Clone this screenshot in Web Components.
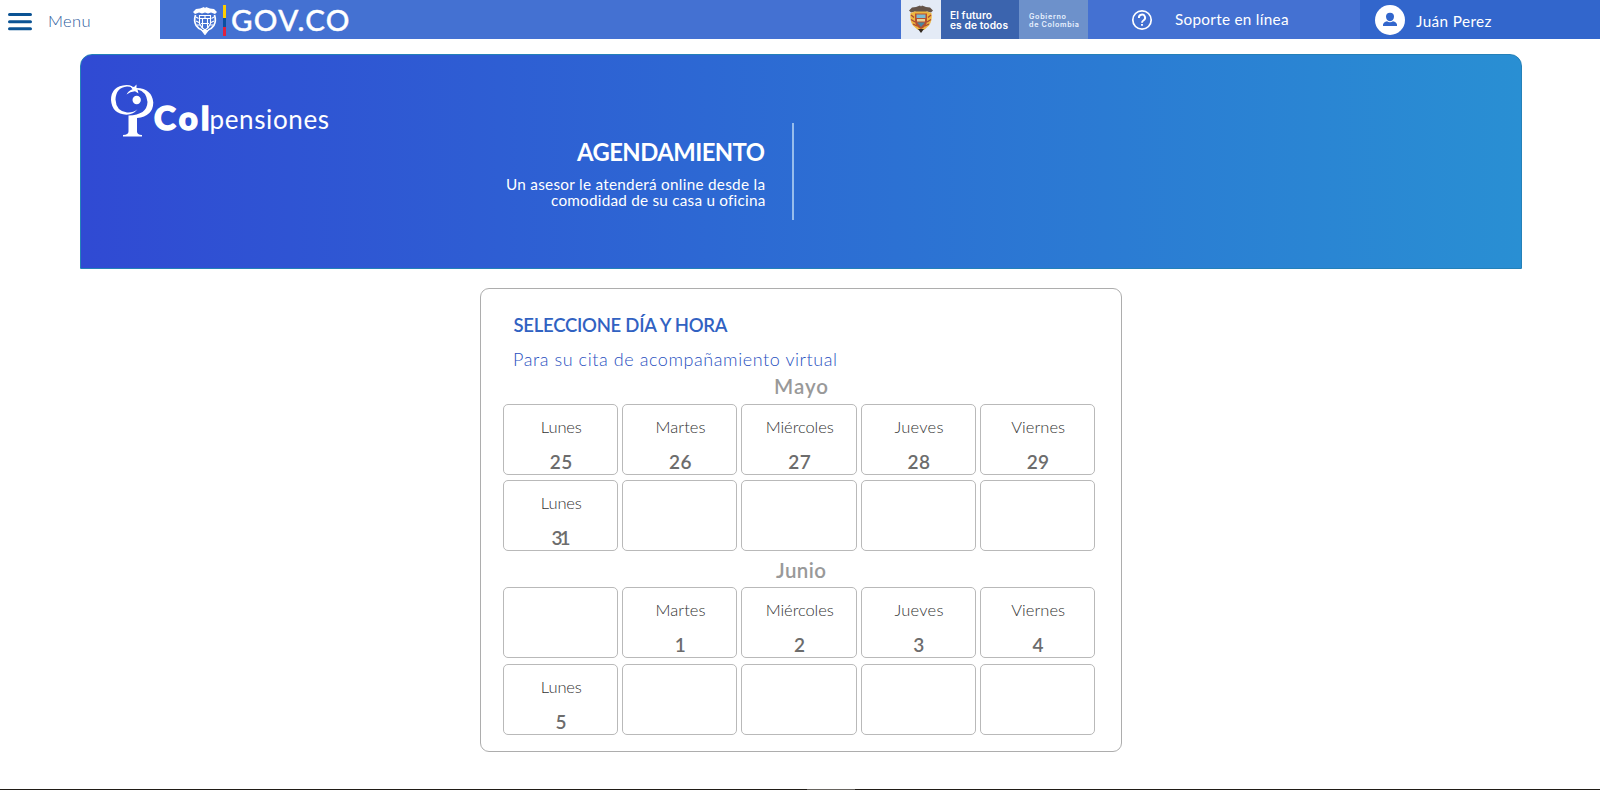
<!DOCTYPE html>
<html lang="es">
<head>
<meta charset="utf-8">
<title>Agendamiento</title>
<style>
html,body{margin:0;background:#fff;font-family:Lato,"Open Sans",sans-serif}
body{height:790px;overflow:hidden}
</style>
</head>
<body>
<agenda-app></agenda-app>
<script>
const define=(name,html,init)=>customElements.define(name,class extends HTMLElement{
  connectedCallback(){
    if(this.shadowRoot)return;
    const t=document.createElement('template');
    t.innerHTML=typeof html==='function'?html(this):html;
    this.attachShadow({mode:'open'}).append(t.content.cloneNode(true));
    if(init)init(this);
  }
});

/* One line of text: s = size, b = baseline from the top of the box, w = advance width */
define('fit-text',el=>{
  const s=+el.getAttribute('s'),b=+el.getAttribute('b');
  return `<style>:host{display:block;flex:none;white-space:nowrap;width:${el.getAttribute('w')}px;height:${el.getAttribute('h')||b}px;font-size:${s}px;line-height:${2*(b-.387*s)}px}span{display:inline-block}</style><span><slot></slot></span>`;
},el=>{
  const sp=el.shadowRoot.querySelector('span'),slot=el.shadowRoot.querySelector('slot');
  const fit=()=>{
    const n=slot.assignedNodes({flatten:true}).map(x=>x.textContent).join('').trim().length;
    if(n<2)return;
    sp.style.letterSpacing='0px';
    const w=sp.getBoundingClientRect().width;
    sp.style.letterSpacing=((+el.getAttribute('w')-w)/(n-1))+'px';
  };
  fit();
  slot.addEventListener('slotchange',fit);
});

define('menu-button',`<style>:host{display:flex;width:160px;height:39px;flex:none;color:#2c5a9c}svg{flex:none;margin:12px 16px 0 8px}fit-text{font-weight:300}</style>
<svg width="24" height="20"><path d="M1.5 2.5H22.5M1.5 9.7H22.5M1.5 16.8H22.5" stroke="#0b5394" stroke-width="3" stroke-linecap="round"/></svg>
<fit-text s="16.5" b="27.600" w="42.500"><slot></slot></fit-text>`);

define('gov-logo',`<style>:host{display:flex;flex:none;color:#fff}.s{margin:6px 5px 0 0}.f{width:3px;height:31px;margin:5px 5px 0 0;background:linear-gradient(#ffce00 13px,#0a4fa0 13px 22px,#e0213e 22px)}fit-text{font-weight:500;-webkit-text-stroke:.4px #fff}</style>
<svg class="s" width="26" height="29" viewBox="0 0 26 29" fill="none" stroke="#fff" stroke-width="1.1">
<path fill="#fff" stroke="none" d="M8 2.500 12 1l1 1.300L14 1l4 1.500 4 .5 3 3-2 2-4-1.500L16 7.500 13 6.500 10 7.500 7 6.500 3 8 1 6 4 3Z"/>
<path stroke-width="1.700" d="M3.500 9Q1.500 15 4.200 19.500Q6.500 23 10 24M22.500 9Q24.500 15 21.800 19.500Q19.500 23 16 24"/>
<path d="M7.500 9.500H18.500V17.500Q17 21.500 13 24Q9 21.500 7.500 17.500ZM7.500 12.500H18.500M9 17.500H17M10.500 13V22M15.500 13V22M13 9.500V12"/><path d="M4 11l2.500 1.500M4 15l3 1.500M5 19l3 0M22 11l-2.500 1.500M22 15l-3 1.500M21 19l-3 0"/><path d="M10 24.500H16L13 28.500Z" fill="#fff"/></svg>
<div class="f"></div><fit-text s="29.500" b="31" w="118.500"><slot></slot></fit-text>`);

define('gov-badge',`<style>:host{display:flex;width:187px;height:39px;flex:none;color:#fff;font-family:Inter,"Open Sans",sans-serif}
.c{width:40px;background:#e4ebf6}.c svg{display:block;margin:5px 0 0 7px}.d{width:78px;background:#3b64ae}.l{width:69px;background:#6d91cb;color:#e9f1ff}.d fit-text{margin-left:9px;font-weight:600}.l fit-text{margin-left:10px;font-weight:600}</style>
<div class="c"><svg width="26" height="29" viewBox="0 0 26 29"><path fill="#655449" d="M8 2 12 .5l1 1 1-1 4 1.500 4 .5 3 3-2 2-4-1-3 1.500H10L7 6.500 3 7.500 1 5.500 4 2.500Z"/>
<path fill="#eeb640" d="M2.500 8 7 6.500H19L23.500 8Q24.500 16 21 20.500L16 25H10L5 20.500Q1.500 16 2.500 8Z"/><path fill="none" stroke="#a64736" stroke-width="1.300" d="M3 10l3 2.500M3 14.500l4 2.500M5 19l4 2M23 10l-3 2.500M23 14.500l-4 2.500M21 19l-4 2"/><path fill="#b5502f" d="M7 8.500H19V17Q18 22 13 24Q8 22 7 17Z"/><path fill="#7cbbd2" d="M8.500 9.500H17.500V13H8.500Z"/><path fill="#e8d392" d="M9 14H17V16.500H9Z"/><path fill="#4b86a0" d="M9 17.500H17L13 22Z"/><path fill="#332a22" d="M10 24 16 24 13 28Z"/></svg></div>
<div class="d"><fit-text s="10.200" b="19.400" h="19" w="42">El futuro</fit-text><fit-text s="10.200" b="10.400" w="58">es de todos</fit-text></div>
<div class="l"><fit-text s="7.200" b="19.500" h="19" w="37">Gobierno</fit-text><fit-text s="7.200" b="8.800" w="50">de Colombia</fit-text></div>`);

define('support-link',`<style>:host{display:flex;flex:none;color:#fff}svg{margin:9px 22px 0 0}</style>
<svg width="22" height="22" viewBox="0 0 22 22" fill="none" stroke="#fff"><circle cx="11" cy="11" r="9.200" stroke-width="1.700"/><path stroke-width="1.900" d="M7.900 9A3.100 3.100 0 1 1 12.700 11.300Q11 12.400 11 13.800M11 15V16.800"/></svg>
<fit-text s="15.300" b="25" w="113.500"><slot></slot></fit-text>`);

define('user-chip',`<style>:host{display:flex;width:240px;height:39px;flex:none;box-sizing:border-box;padding-left:15px;background:#3266cc;color:#fff}svg{margin:5px 11px 0 0}</style>
<svg width="30" height="30"><circle cx="15" cy="15" r="15" fill="#fff"/><path fill="#3266cc" d="M11 11.500a4 3.800 0 0 1 8 0q0 4-4 4.800Q11 15.500 11 11.500ZM8 21V19.500Q8.500 17 12 16.200Q15 18.500 18 16.200Q21.500 17 22 19.500V21Z"/></svg>
<fit-text s="15.300" b="27" w="75.500"><slot></slot></fit-text>`);

define('top-bar',`<style>:host{display:flex;height:39px}.b{display:flex;flex:1;background:#4471d2;padding-left:32px}gov-logo{width:709px}support-link{margin-left:43px;width:229px}</style>
<menu-button>Menu</menu-button><div class="b"><gov-logo>GOV.CO</gov-logo><gov-badge></gov-badge><support-link>Soporte en línea</support-link><user-chip>Juán Perez</user-chip></div>`);

define('col-logo',`<style>:host{display:flex;color:#fff;flex:none}svg{flex:none}.a{font-weight:900;-webkit-text-stroke:1.500px #fff}.p{font-weight:400}</style>
<svg width="43" height="54" viewBox="0 0 43 54" fill="#fff"><path d="M21 2.200Q19 1 15.500 1Q0 2 0 16Q1 30 15.500 30.700Q22.500 30.500 26.500 25.300Q22 29 16 28.500Q5 27 4.500 15.500Q5 3.500 16 2.500Q19 2.500 21 3.500Z"/>
<path d="M19 2 23 3 25.500.5 25.500 4Q41 4.500 42.300 18.500Q42 32.500 26 34V47.500Q26 50.800 31 51V52.600H12V51Q17.500 50.800 17.500 47.500V31.500Q36 31 36.500 18Q35.500 7.500 26.500 5.500L27.500 9.500 24 7.300Q19 7.500 15.500 10.500Q17 7 21.500 5.200Z"/><circle cx="25.700" cy="16" r="4.200"/></svg>
<fit-text class="a" s="33" b="46.400" h="46" w="55.500">Col</fit-text><fit-text class="p" s="26" b="46" w="119.500">pensiones</fit-text>`);

define('hero-banner',`<style>:host{display:flex;box-sizing:border-box;width:1442px;height:215px;margin:15px 0 0 80px;padding-left:30px;border-radius:12px 12px 0 0;border:1px solid #2481b8;background:linear-gradient(90deg,#304ad3,#298fd3);color:#fff}
col-logo{margin-top:29px;width:219px}.t{width:435px;margin-top:81px;display:flex;flex-direction:column;align-items:flex-end}.h{font-weight:700}hr{border:0;margin:68px 0 0 27px;width:2px;height:97px;background:#97bdec}</style>
<col-logo></col-logo><div class="t"><fit-text class="h" s="23.800" b="26" w="188"><slot name="title"></slot></fit-text>
<fit-text s="15.300" b="28.500" w="259">Un asesor le atenderá online desde la</fit-text><fit-text s="15.300" b="15" w="214">comodidad de su casa u oficina</fit-text></div><hr>`);

define('day-cell',el=>{
  const d=el.getAttribute('day'),n=el.getAttribute('num');
  const w={Lunes:41,Martes:50,'Miércoles':68,Jueves:49,Viernes:54}[d],nw=n==='31'?19:n&&n.length>1?22.5:11;
  return `<style>:host{display:flex;flex-direction:column;align-items:center;box-sizing:border-box;height:71px;border:1px solid #b9b9b9;border-radius:5px}.d{color:#333;font-weight:300;margin-left:1.500px}.n{color:#6c6c6c;font-weight:600;margin-left:1px}</style>`+(d?`<fit-text class="d" s="16.500" b="29" w="${w}">${d}</fit-text><fit-text class="n" s="19" b="35.200" w="${nw}">${n}</fit-text>`:'');
});

define('month-grid',el=>`<style>:host{display:block}.m{color:#999;font-weight:600;margin-left:${el.getAttribute('x')}px}.g{display:grid;grid-template-columns:repeat(5,1fr);column-gap:4px;row-gap:${el.getAttribute('gap')}px;margin-top:${el.getAttribute('m')}px}</style>
<fit-text class="m" s="20.500" b="${el.getAttribute('b')}" w="${el.getAttribute('w')}">${el.getAttribute('name')}</fit-text><div class="g">${el.getAttribute('days').split(' ').map(x=>{const[d,n]=x.split(':');return n?`<day-cell day="${d}" num="${n}"></day-cell>`:'<day-cell></day-cell>'}).join('')}</div>`);

define('schedule-card',`<style>:host{display:block;box-sizing:border-box;width:642px;height:464px;margin:19px 0 0 480px;border:1px solid #adadad;border-radius:9px;padding:0 26px 0 22px}.t{color:#3162c2;font-weight:600;margin-left:10.500px}.s{color:#2850c0;font-weight:300;margin-left:10px}</style>
<fit-text class="t" s="18.500" b="44" h="43" w="214">SELECCIONE DÍA Y HORA</fit-text><fit-text class="s" s="18" b="34.500" h="34" w="324">Para su cita de acompañamiento virtual</fit-text>
<month-grid name="Mayo" x="271" w="54" b="28" m="10" gap="5" days="Lunes:25 Martes:26 Miércoles:27 Jueves:28 Viernes:29 Lunes:31 - - - -"></month-grid>
<month-grid name="Junio" x="273" w="50" b="27" m="9" gap="6" days="- Martes:1 Miércoles:2 Jueves:3 Viernes:4 Lunes:5 - - - -"></month-grid>`);

define('agenda-app',`<style>:host{display:block;height:790px}footer{height:1px;margin-top:37px;background:linear-gradient(90deg,#201c16 807px,#67645f 807px 855px,#201c16 855px)}</style>
<top-bar></top-bar><hero-banner><span slot="title">AGENDAMIENTO</span></hero-banner><schedule-card></schedule-card><footer></footer>`);
</script>
</body>
</html>
